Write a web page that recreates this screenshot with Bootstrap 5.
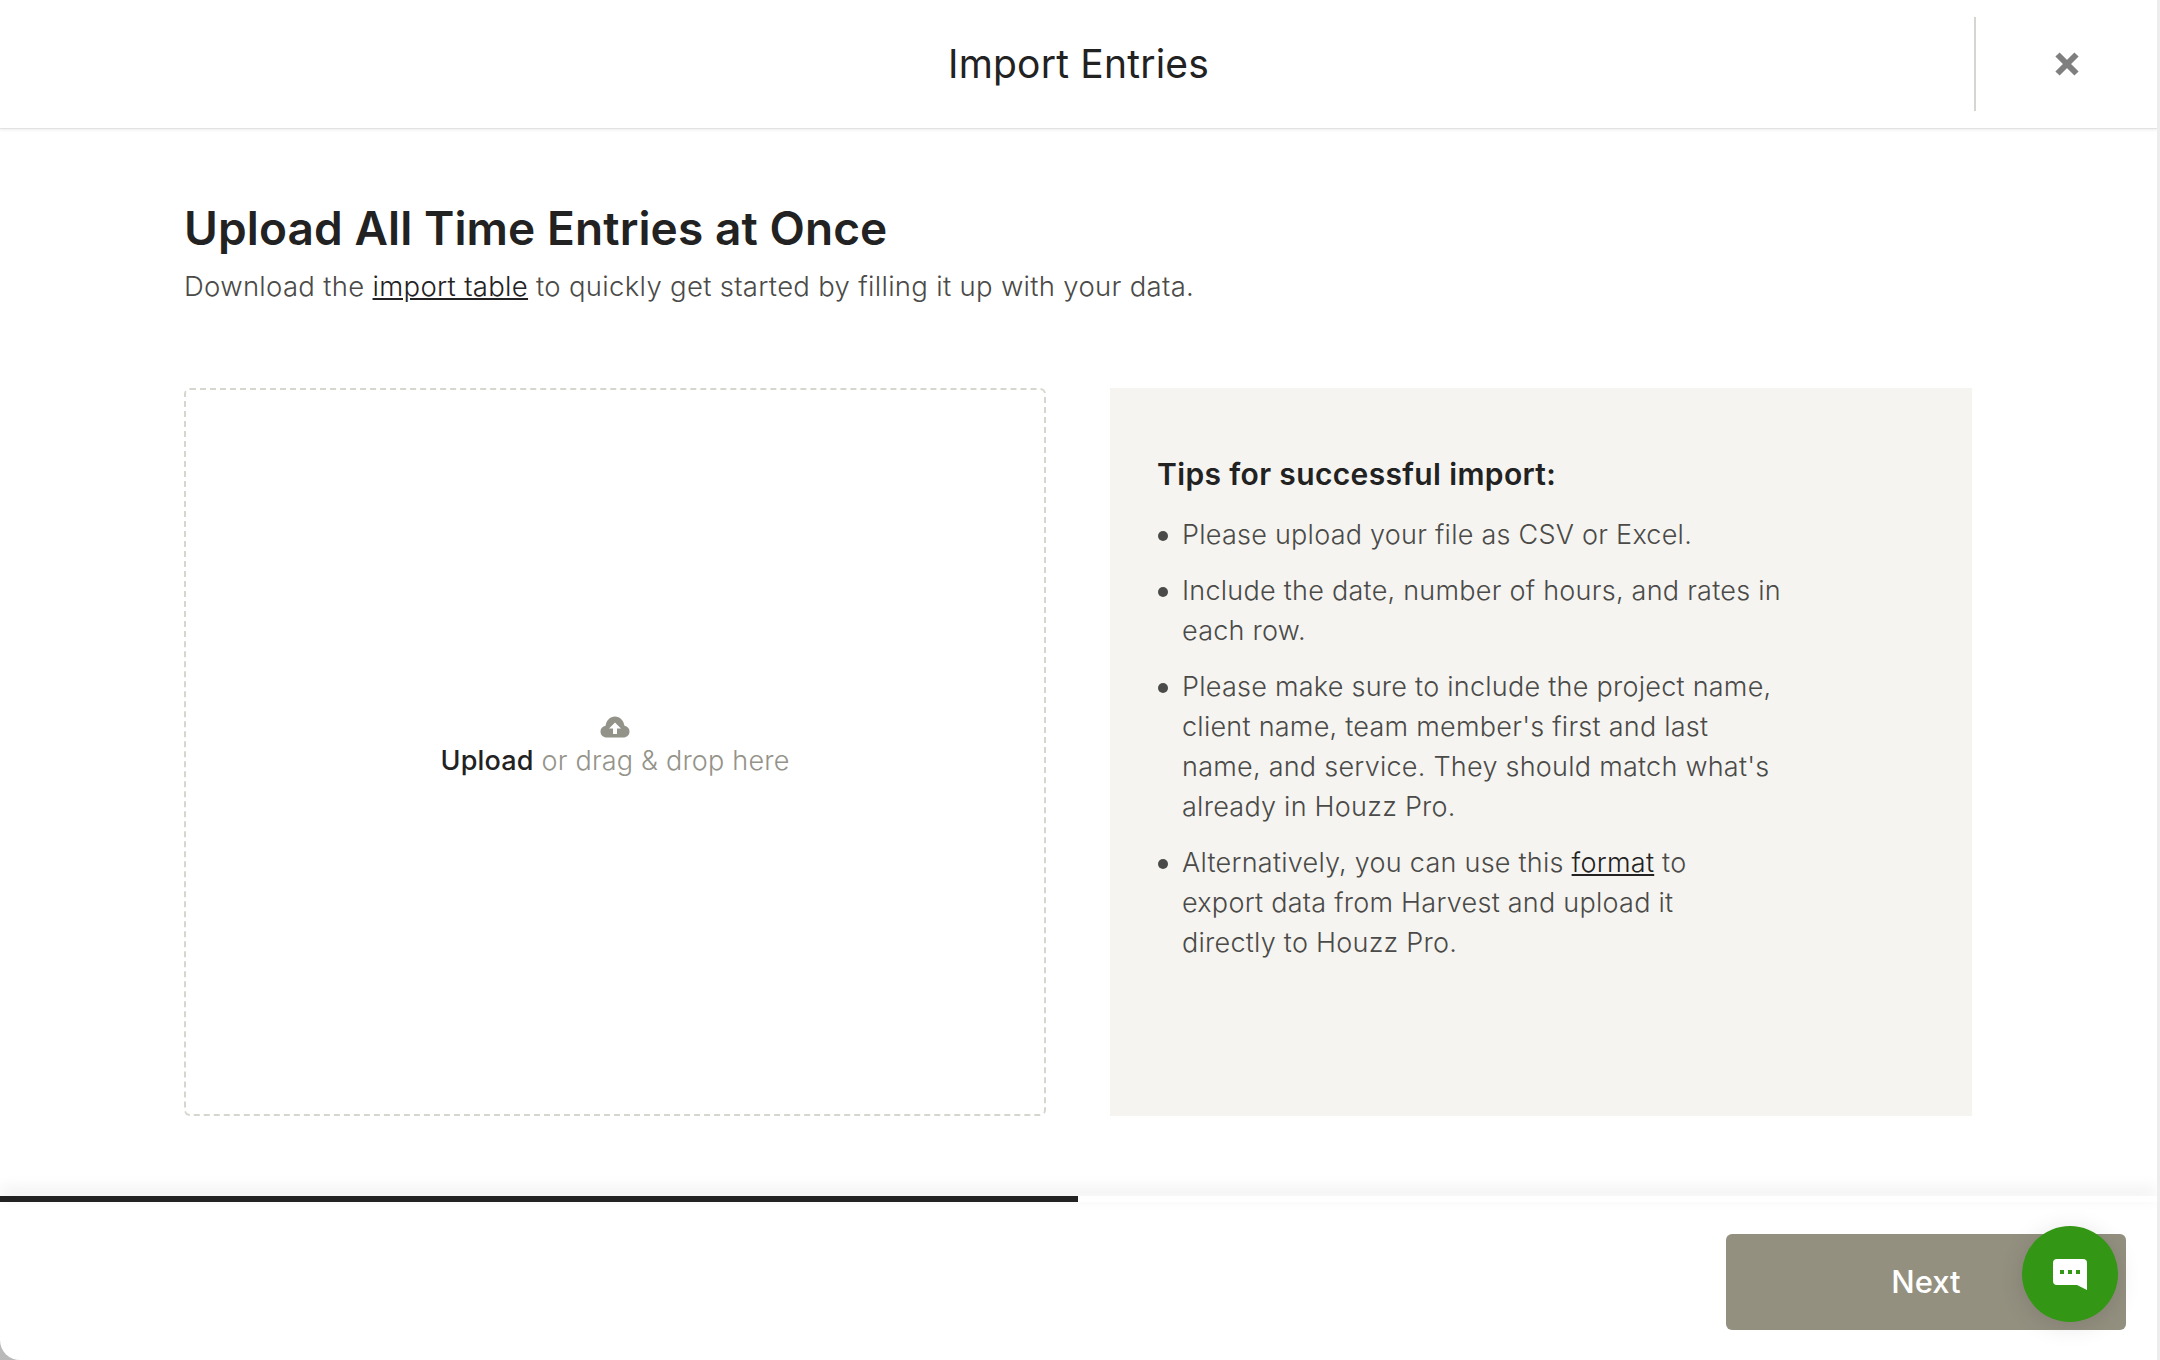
<!DOCTYPE html>
<html lang="en"><head><meta charset="utf-8"><title>Import Entries</title>
<link href="https://cdn.jsdelivr.net/npm/bootstrap@5.3.0/dist/css/bootstrap.min.css" rel="stylesheet">
<style>
html,body{height:100%;overflow:hidden}
body{background:linear-gradient(90deg,#b9b9b9 24px,#ededed 24px);font-family:"Inter","Liberation Sans",sans-serif;color:#222}
.sheet{width:2157px;height:1360px;background:#fff;border-bottom-left-radius:20px}
.top-bar{height:129px;border-bottom:1px solid #e2e2e0;box-shadow:0 1px 3px rgba(0,0,0,.08)}
.top-spacer{width:183px}
.top-title{font-size:39px;font-weight:400;color:#222;margin:0;letter-spacing:.2px}
.top-close{width:183px;height:94px;border-left:2px solid #d6d6cf}
.main-area{padding:68px 184px 0 184px;height:1067px}
.page-h{font-size:46px;font-weight:600;color:#222;line-height:60px;margin:1px 0 0;letter-spacing:.1px}
.page-sub{font-size:27.5px;line-height:40px;color:#4a4a48;margin:8px 0 0;font-weight:300;letter-spacing:.3px}
.page-sub a,.tip-list a{color:#222}
.two-col{margin-top:82px;gap:64px;height:728px}
.two-col>div{width:862px}
.drop-zone{border:2px dashed #d6d6cf;border-radius:6px;padding-bottom:11px}
.drop-icon{margin-bottom:6px}
.drop-text{font-size:27px;line-height:34px;color:#94938a;font-weight:300;letter-spacing:.2px}
.drop-text b{color:#222;font-weight:500}
.tips-box{background:#f5f4f0;padding:62px 48px 0 47px}
.tips-h{font-size:30px;line-height:48px;font-weight:600;color:#222;margin:0 0 17px;letter-spacing:.36px}
.tip-list{list-style:none;padding:0;margin:0 0 0 1px;width:640px;font-size:27px;line-height:40px;color:#4a4a48;font-weight:300;letter-spacing:.25px}
.tip-list li{position:relative;padding-left:24px;margin-bottom:16px}
.tip-list li::before{content:"";position:absolute;left:0;top:16px;width:10px;height:10px;border-radius:50%;background:#4a4a48}
.bar-zone{height:6px;background:#fff;box-shadow:0 -6px 16px rgba(0,0,0,.12)}
.bar-fill{width:1078px;height:6px;background:#222}
.bottom-bar{height:158px;padding:32px 31px 0 0}
.next-btn{width:400px;height:96px;background:#949080;border:0;border-radius:6px;color:#fff;font-size:31px;font-weight:500}
.chat-fab{position:absolute;left:2022px;top:1226px;width:96px;height:96px;border-radius:50%;background:#339614;box-shadow:0 4px 24px rgba(0,0,0,.12)}
</style></head>
<body>
<div class="sheet d-flex flex-column position-relative overflow-hidden">
  <header class="top-bar d-flex align-items-center flex-shrink-0">
    <div class="top-spacer"></div>
    <h1 class="top-title flex-grow-1 text-center">Import Entries</h1>
    <div class="top-close d-flex align-items-center justify-content-center">
      <svg width="26" height="26" viewBox="0 0 26 26"><path d="M3.500 3.500L22.500 22.500M22.500 3.500L3.500 22.500" stroke="#7f7f7f" stroke-width="6" fill="none"/></svg>
    </div>
  </header>
  <main class="main-area flex-shrink-0">
    <h2 class="page-h">Upload All Time Entries at Once</h2>
    <p class="page-sub">Download the <a href="#">import table</a> to quickly get started by filling it up with your data.</p>
    <div class="two-col d-flex">
      <div class="drop-zone d-flex flex-column align-items-center justify-content-center">
        <svg class="drop-icon" width="30" height="22" viewBox="0 0 30 22"><path d="M7 21.500C3 21.500 .5 19 .5 15.500C.5 12.500 2.500 10.200 5.500 9.800C6.300 4.500 10 .5 15 .5C20 .5 23.700 4.500 24.500 9.800C27.500 10.200 29.500 12.500 29.500 15.500C29.500 19 27 21.500 23 21.500Z" fill="#94938a"/><path d="M15 6.500L21 12.500H17V18H13V12.500H9Z" fill="#fff"/></svg>
        <div class="drop-text"><b>Upload</b> or drag &amp; drop here</div>
      </div>
      <div class="tips-box">
        <h3 class="tips-h">Tips for successful import:</h3>
        <ul class="tip-list">
          <li>Please upload your file as CSV or Excel.</li>
          <li>Include the date, number of hours, and rates in<br>each row.</li>
          <li>Please make sure to include the project name,<br>client name, team member's first and last<br>name, and service. They should match what's<br>already in Houzz Pro.</li>
          <li>Alternatively, you can use this <a href="#">format</a> to<br>export data from Harvest and upload it<br>directly to Houzz Pro.</li>
        </ul>
      </div>
    </div>
  </main>
  <div class="bar-zone flex-shrink-0"><div class="bar-fill"></div></div>
  <footer class="bottom-bar d-flex justify-content-end align-items-start">
    <button class="next-btn btn" type="button">Next</button>
  </footer>
  <div class="chat-fab d-flex align-items-center justify-content-center">
    <svg width="34" height="31" viewBox="0 0 34 31"><path d="M4 0H30A4 4 0 0 1 34 4V31L24 26H4A4 4 0 0 1 0 22V4A4 4 0 0 1 4 0Z" fill="#fff"/><rect x="7" y="11" width="4" height="4" fill="#339614"/><rect x="15" y="11" width="4" height="4" fill="#339614"/><rect x="23" y="11" width="4" height="4" fill="#339614"/></svg>
  </div>
</div>
<script src="https://cdn.jsdelivr.net/npm/bootstrap@5.3.0/dist/js/bootstrap.bundle.min.js"></script>
</body></html>
